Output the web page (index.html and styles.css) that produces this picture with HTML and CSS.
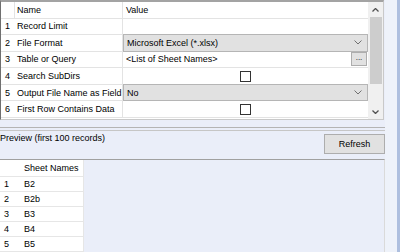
FILE: index.html
```html
<!DOCTYPE html>
<html lang="en">
<head>
  <meta charset="UTF-8">
  <title>Input Data - Excel</title>
  <link rel="stylesheet" href="styles.css">
</head>
<body>
  <div class="janela">
    <div class="principal">

      <div class="props">
        <div class="grelha">
          <div class="linha cabecalho">
            <span class="num"></span>
            <span class="nome">Name</span>
            <span class="valor">Value</span>
          </div>
          <div class="linha">
            <span class="num">1</span>
            <span class="nome">Record Limit</span>
            <span class="valor"></span>
          </div>
          <div class="linha">
            <span class="num">2</span>
            <span class="nome">File Format</span>
            <span class="valor combo">Microsoft Excel (*.xlsx)
              <svg class="seta" width="8" height="5" viewBox="0 0 8 5"><path d="M0.5 0.5 L4 4 L7.5 0.5" fill="none" stroke="#707070" stroke-width="1"/></svg>
            </span>
          </div>
          <div class="linha">
            <span class="num">3</span>
            <span class="nome">Table or Query</span>
            <span class="valor texto">&lt;List of Sheet Names&gt;<span class="reticencias">...</span></span>
          </div>
          <div class="linha">
            <span class="num">4</span>
            <span class="nome">Search SubDirs</span>
            <span class="valor centro"><span class="caixa"></span></span>
          </div>
          <div class="linha">
            <span class="num">5</span>
            <span class="nome">Output File Name as Field</span>
            <span class="valor combo">No
              <svg class="seta" width="8" height="5" viewBox="0 0 8 5"><path d="M0.5 0.5 L4 4 L7.5 0.5" fill="none" stroke="#707070" stroke-width="1"/></svg>
            </span>
          </div>
          <div class="linha">
            <span class="num">6</span>
            <span class="nome">First Row Contains Data</span>
            <span class="valor centro"><span class="caixa"></span></span>
          </div>
        </div>

        <div class="barra">
          <div class="botao-barra">
            <svg width="7" height="4" viewBox="0 0 7 4"><path d="M0.5 3.5 L3.5 0.5 L6.5 3.5" fill="none" stroke="#505050" stroke-width="1.3"/></svg>
          </div>
          <div class="trilho"><div class="polegar"></div></div>
          <div class="botao-barra">
            <svg width="7" height="4" viewBox="0 0 7 4"><path d="M0.5 0.5 L3.5 3.5 L6.5 0.5" fill="none" stroke="#505050" stroke-width="1.3"/></svg>
          </div>
        </div>
      </div>

      <div class="divisor"></div>

      <div class="barra-preview">
        <span class="rotulo">Preview (first 100 records)</span>
        <button class="refresh">Refresh</button>
      </div>

      <div class="preview">
        <table class="folhas">
          <tr class="cabecalho"><td class="n"></td><td>Sheet Names</td></tr>
          <tr><td class="n">1</td><td>B2</td></tr>
          <tr><td class="n">2</td><td>B2b</td></tr>
          <tr><td class="n">3</td><td>B3</td></tr>
          <tr><td class="n">4</td><td>B4</td></tr>
          <tr><td class="n">5</td><td>B5</td></tr>
        </table>
      </div>

    </div>
    <div class="margem"></div>
  </div>
</body>
</html>
```

FILE: styles.css
```css
* {
  box-sizing: border-box;
}

body {
  margin: 0;
  font-family: 'Liberation Sans', Arial, sans-serif;
  font-size: 9px;
  color: #000;
  background: #eaeef9;
}

.janela {
  display: flex;
  width: 400px;
  height: 252px;
  overflow: hidden;
}

.principal {
  width: 385px;
  display: flex;
  flex-direction: column;
}

.margem {
  flex: 1;
  background: #eef2fa;
  border-right: 3px solid #aebfdf;
}

/* grelha de propriedades */
.props {
  display: flex;
  height: 120px;
  width: 384px;
  border-top: 2px solid #a3a3a3;
  border-left: 1px solid #6f6f6f;
  border-bottom: 1px solid #c9c9c9;
  border-right: 1px solid #c9c9c9;
  background: #fff;
}

.grelha {
  width: 367px;
}

.linha {
  display: flex;
  height: 16.6px;
  border-bottom: 1px solid #e3e3e3;
}

.linha.cabecalho {
  height: 16.5px;
}

.linha span {
  display: flex;
  align-items: center;
}

.num {
  width: 14px;
  padding-left: 4px;
}

.cabecalho .num {
  border-right: 1px solid #e3e3e3;
}

.nome {
  width: 108px;
  padding-left: 2px;
  border-right: 1px solid #e3e3e3;
}

.valor {
  flex: 1;
  padding-left: 3px;
  position: relative;
}

.combo {
  background: #e1e1e1;
  border: 1px solid #b5b5b5;
  margin: -1px 0 -1px 0;
  justify-content: space-between;
  padding-right: 5px;
}

.texto {
  justify-content: space-between;
  padding-right: 1px;
}

.reticencias {
  width: 16px;
  height: 14px;
  background: #e1e1e1;
  border: 1px solid #adadad;
  justify-content: center;
  font-size: 8px;
  padding-bottom: 3px;
}

.centro {
  padding-left: 117px;
}

.caixa {
  width: 11px;
  height: 11px;
  border: 1px solid #333;
  background: #fff;
}

/* barra de rolagem */
.barra {
  width: 15px;
  display: flex;
  flex-direction: column;
  background: #f0f0f0;
}

.botao-barra {
  height: 15px;
  display: flex;
  align-items: center;
  justify-content: center;
}

.trilho {
  flex: 1;
  padding: 0 1px 0 2px;
}

.polegar {
  height: 67px;
  background: #cdcdcd;
}

/* separador */
.divisor {
  width: 388px;
  height: 4px;
  margin-top: 7px;
  border-top: 1px solid #b4b4b4;
  border-bottom: 1px solid #c6c6c6;
}

.barra-preview {
  height: 28px;
  display: flex;
  justify-content: space-between;
  align-items: flex-start;
}

.rotulo {
  padding-top: 2px;
}

.refresh {
  width: 61px;
  height: 20px;
  margin-top: 3px;
  background: #e1e1e1;
  border: 1px solid #adadad;
  font-family: 'Liberation Sans', Arial, sans-serif;
  font-size: 9px;
  color: #000;
  padding: 0;
}

/* preview */
.preview {
  flex: 1;
  border-top: 1px solid #a0a0a0;
  border-right: 1px solid #dadada;
  background: #eaeef9;
}

.folhas {
  border-collapse: collapse;
  background: #fff;
  width: 84px;
  border-right: 1px solid #e6e6e6;
}

.folhas td {
  height: 15px;
  padding: 0 0 0 0;
  border-bottom: 1px solid #e6e6e6;
}

.folhas .cabecalho td {
  height: 16px;
}

.folhas .n {
  width: 24px;
  padding-left: 4px;
}
```
